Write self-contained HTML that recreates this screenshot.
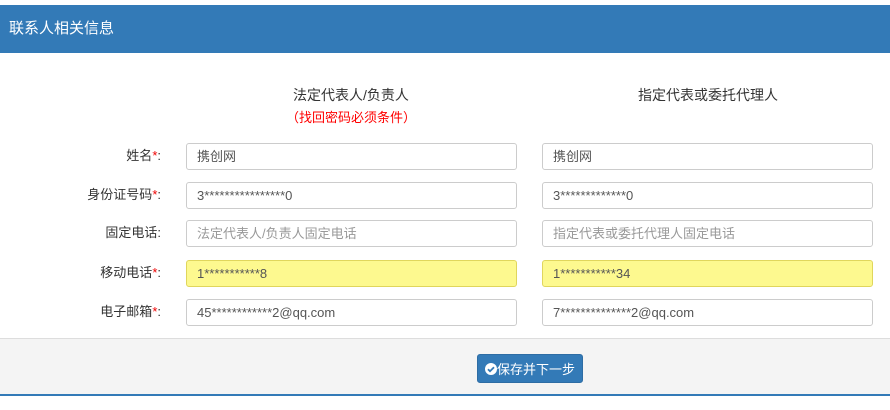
<!DOCTYPE html>
<html><head><meta charset="utf-8"><style>
body{margin:0;width:890px;height:410px;background:#fff;font-family:"Liberation Sans","Noto Sans CJK SC",sans-serif;position:relative;overflow:hidden}
.hd{position:absolute;left:0;top:5px;width:890px;height:48px;background:#337ab7;color:#fff;font-size:15px;line-height:48px;padding-left:9px;box-sizing:border-box}
.t{position:absolute;font-size:14px;color:#333;text-align:center}
.lb{position:absolute;right:729px;font-size:13px;color:#333;line-height:27px;white-space:nowrap}
.lb i{color:#e00;font-style:normal}
.in{position:absolute;width:331px;height:27px;border:1px solid #ccc;border-radius:3px;box-sizing:border-box;font-size:13px;color:#555;line-height:25px;padding-left:10px;background:#fff}
.ph{color:#999}
.y{background:#fdf98f;border-color:#e0d65c;color:#555}
.ft{position:absolute;left:0;top:338px;width:890px;height:58px;background:#f4f4f4;border-top:1px solid #ddd;border-bottom:2px solid #337ab7;box-sizing:border-box}
.bt{position:absolute;left:477px;top:354px;width:106px;height:29px;background:#337ab7;border-radius:3px;color:#fff;font-size:13px;line-height:29px;text-align:center;border:1px solid #2e6da4;box-sizing:border-box}
</style></head><body>
<div class="hd">联系人相关信息</div>
<div class="t" style="left:251px;width:200px;top:85px">法定代表人/负责人</div>
<div class="t" style="left:251px;width:200px;top:107px;color:#f00;font-size:13px">（找回密码必须条件）</div>
<div class="t" style="left:608px;width:200px;top:85px">指定代表或委托代理人</div>
<div class="lb" style="top:142px">姓名<i>*</i>:</div>
<div class="lb" style="top:181px">身份证号码<i>*</i>:</div>
<div class="lb" style="top:219px">固定电话:</div>
<div class="lb" style="top:259px">移动电话<i>*</i>:</div>
<div class="lb" style="top:298px">电子邮箱<i>*</i>:</div>
<div class="in" style="left:186px;top:143px">携创网</div>
<div class="in" style="left:542px;top:143px">携创网</div>
<div class="in" style="left:186px;top:182px">3****************0</div>
<div class="in" style="left:542px;top:182px">3*************0</div>
<div class="in ph" style="left:186px;top:220px">法定代表人/负责人固定电话</div>
<div class="in ph" style="left:542px;top:220px">指定代表或委托代理人固定电话</div>
<div class="in y" style="left:186px;top:260px">1***********8</div>
<div class="in y" style="left:542px;top:260px">1***********34</div>
<div class="in" style="left:186px;top:299px">45************2@qq.com</div>
<div class="in" style="left:542px;top:299px">7**************2@qq.com</div>
<div class="ft"></div>
<div class="bt"><svg width="12" height="12" viewBox="0 0 12 12" style="vertical-align:-1px"><circle cx="6" cy="6" r="6" fill="#fff"/><path d="M3 6.2l2 2 4-4" stroke="#337ab7" stroke-width="1.8" fill="none"/></svg>保存并下一步</div>
</body></html>
